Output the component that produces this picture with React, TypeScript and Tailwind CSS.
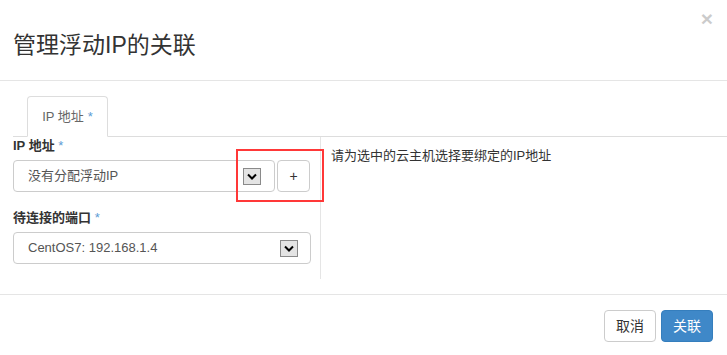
import React from "react";

const font = {
  fontFamily: '"Liberation Sans", Arial, "Noto Sans CJK SC", sans-serif',
};

const SelectArrow = () => (
  <span className="flex h-[17px] w-[18px] items-center justify-center border border-[#8a8a8a] bg-[#e4e4e4]">
    <svg width="10" height="7" viewBox="0 0 10 7">
      <path d="M1 1.5 L5 5.5 L9 1.5" fill="none" stroke="#000" strokeWidth="2" />
    </svg>
  </span>
);

const FakeSelect = ({ value, className }: { value: string; className: string }) => (
  <div
    className={`flex h-[32px] items-center justify-between rounded-[4px] border border-[#ccc] bg-white pl-[14px] text-[13px] text-[#555] ${className}`}
  >
    <span>{value}</span>
    <SelectArrow />
  </div>
);

const App = () => {
  return (
    <div className="relative h-[355px] w-[727px] overflow-hidden bg-white text-[#333]" style={font}>
      {/* header */}
      <div className="h-[81px] border-b border-[#e5e5e5] px-[13px] pt-[30px]">
        <h4 className="text-[23px] leading-[30px] text-[#333]">管理浮动IP的关联</h4>
      </div>
      <button className="absolute right-[14px] top-[7px] text-[21px] font-bold leading-[24px] text-black opacity-20">
        ×
      </button>

      {/* body */}
      <div className="pl-[13px] pt-[15px]">
        <div className="flex border-b border-[#ddd]">
          <div className="relative -mb-px ml-[14px] flex h-[41px] w-[81px] items-center justify-center rounded-t-[4px] border border-b-white border-[#ddd] bg-white text-[13px] text-[#666]">
            IP 地址 <span className="ml-1 text-[#5b9bd5]">*</span>
          </div>
        </div>

        <div className="flex">
          <div className="relative w-[308px] border-r border-[#e5e5e5] pb-[15px] pr-[10px]">
            <label className="mb-[5px] block text-[13px] font-bold leading-[18px] text-[#333]">
              IP 地址 <span className="font-normal text-[#5b9bd5]">*</span>
            </label>
            <div className="flex gap-[2px]">
              <FakeSelect value="没有分配浮动IP" className="w-[263px] pr-[13px]" />
              <button className="h-[32px] w-[33px] rounded-[4px] border border-[#ccc] bg-white text-[14px] text-[#333]">
                +
              </button>
            </div>
            <div className="absolute left-[223px] top-[12px] h-[53px] w-[88px] border-2 border-[#ff3838]" />

            <label className="mb-[5px] mt-[17px] block text-[13px] font-bold leading-[18px] text-[#333]">
              待连接的端口 <span className="font-normal text-[#5b9bd5]">*</span>
            </label>
            <FakeSelect value="CentOS7: 192.168.1.4" className="w-[298px] pr-[12px]" />
          </div>
          <div className="pl-[10px] pt-[10px] text-[13px] leading-[18px] text-[#333]">
            请为选中的云主机选择要绑定的IP地址
          </div>
        </div>
      </div>

      {/* footer */}
      <div className="mt-[15px] flex justify-end gap-[5px] border-t border-[#e5e5e5] pr-[14px] pt-[15px]">
        <button className="h-[32px] w-[52px] rounded-[4px] border border-[#ccc] bg-white text-[14px] text-[#333]">
          取消
        </button>
        <button className="h-[32px] w-[52px] rounded-[4px] border border-[#357ebd] bg-[#3f88c8] text-[14px] text-white">
          关联
        </button>
      </div>
    </div>
  );
};

export default App;
